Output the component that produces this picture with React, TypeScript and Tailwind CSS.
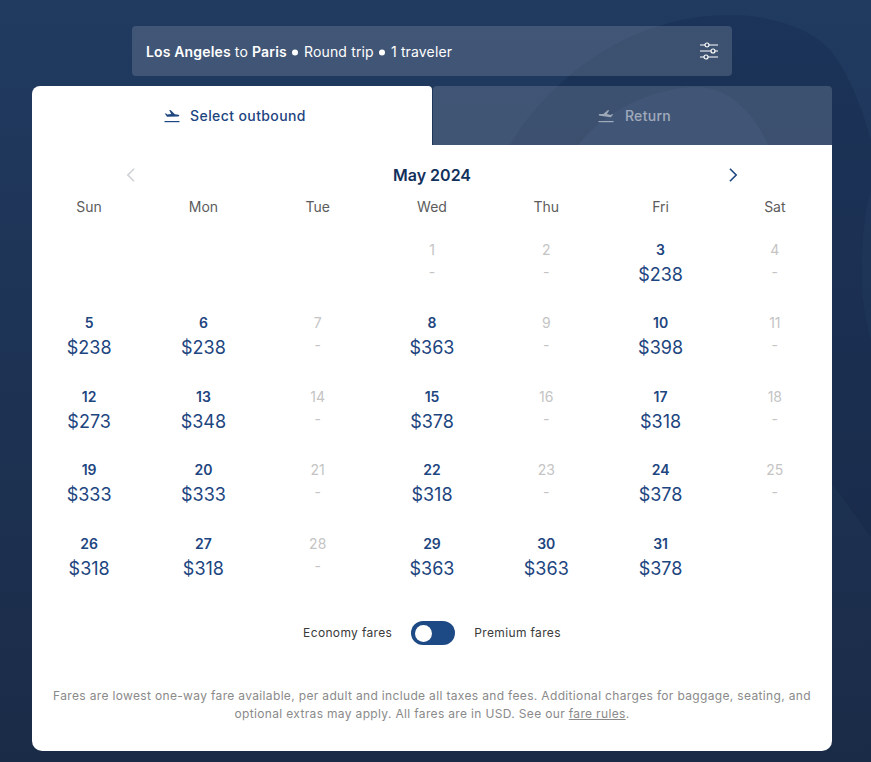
import React from 'react';

const days = [
  { d: '', p: null }, { d: '', p: null }, { d: '', p: null },
  { d: '1', p: null }, { d: '2', p: null }, { d: '3', p: '$238' }, { d: '4', p: null },
  { d: '5', p: '$238' }, { d: '6', p: '$238' }, { d: '7', p: null }, { d: '8', p: '$363' }, { d: '9', p: null }, { d: '10', p: '$398' }, { d: '11', p: null },
  { d: '12', p: '$273' }, { d: '13', p: '$348' }, { d: '14', p: null }, { d: '15', p: '$378' }, { d: '16', p: null }, { d: '17', p: '$318' }, { d: '18', p: null },
  { d: '19', p: '$333' }, { d: '20', p: '$333' }, { d: '21', p: null }, { d: '22', p: '$318' }, { d: '23', p: null }, { d: '24', p: '$378' }, { d: '25', p: null },
  { d: '26', p: '$318' }, { d: '27', p: '$318' }, { d: '28', p: null }, { d: '29', p: '$363' }, { d: '30', p: '$363' }, { d: '31', p: '$378' }, { d: '', p: null },
];

const weekdays = ['Sun', 'Mon', 'Tue', 'Wed', 'Thu', 'Fri', 'Sat'];

function PlaneIcon({ mirrored, className }: { mirrored?: boolean; className?: string }) {
  return (
    <svg viewBox="0 0 16 14" className={className} fill="currentColor">
      <g transform={mirrored ? 'translate(16 0) scale(-1 1) rotate(-6 8 6)' : undefined}>
        <path d="M1 4.800L3 7.800 14 7.400C15.300 7.200 15.800 6.200 14.600 5.700L10.800 5.200 6.800 1.200 5.200 1 7.200 5 3.200 5.500 1.900 4.300z" />
      </g>
      <rect x="0.500" y="12" width="15" height="1.200" />
    </svg>
  );
}

function SlidersIcon() {
  return (
    <svg viewBox="0 0 20 18" className="h-[18px] w-5" fill="none" stroke="currentColor" strokeWidth="1.200">
      <path d="M1 3h5M10 3h9M1 9h11M16 9h3M1 15h4M9 15h10" />
      <circle cx="8" cy="3" r="2" />
      <circle cx="14" cy="9" r="2" />
      <circle cx="7" cy="15" r="2" />
    </svg>
  );
}

function Dot() {
  return <span className="mx-[1.500px] inline-block h-[6px] w-[6px] translate-y-[-1.500px] rounded-full bg-white" />;
}

export default function App() {
  return (
    <div className="relative h-[762px] overflow-hidden bg-gradient-to-b from-[#203a60] to-[#1a2b47] font-['Inter','Liberation_Sans',sans-serif]">
      {/* background swirl */}
      <svg viewBox="0 0 871 762" className="absolute inset-0 h-full w-full">
        <path
          d="M510 145C545 85 625 15 730 15C775 15 815 32 830 50C845 68 860 100 871 140L871 190C862 220 860 270 863 300C865 315 868 330 871 340L871 537L833 485L510 300z"
          fill="#102040"
          fillOpacity="0.2"
        />
        <path d="M578 145C610 105 660 87 697 87C730 87 755 115 768 145z" fill="#20395f" />
      </svg>

      <div className="relative ml-[32px] flex w-[800px] flex-col pt-[26px]">
        <div className="ml-[100px] flex h-[50px] w-[600px] items-center justify-between rounded-[4px] bg-white/15 pl-[14px] pr-[13px] text-[14px] tracking-[0.15px] text-white">
          <div>
            <span className="font-semibold">Los Angeles</span> to <span className="font-semibold">Paris</span> <Dot /> Round trip <Dot /> 1 traveler
          </div>
          <SlidersIcon />
        </div>

        <div className="mt-[10px] flex h-[59px]">
          <div className="flex w-[400px] items-center justify-center gap-[10px] rounded-tl-[8px] rounded-tr-[4px] bg-white pl-[6px] text-[14px] font-medium tracking-[0.4px] text-[#1d4580]">
            <PlaneIcon className="h-[14px] w-[16px]" />
            Select outbound
          </div>
          <div className="ml-px flex flex-1 items-center justify-center gap-[11px] rounded-t-[4px] bg-white/15 pl-[4px] text-[14px] font-medium tracking-[0.3px] text-white/50">
            <PlaneIcon mirrored className="h-[14px] w-[16px]" />
            Return
          </div>
        </div>

        <div className="h-[606px] rounded-b-[10px] bg-white">
          <div className="relative flex h-[50px] items-start justify-center pt-[15px] text-[#12305c]">
            <div className="flex h-[30px] items-center text-[16px] font-semibold">May 2024</div>
            <svg viewBox="0 0 12 18" className="absolute left-[93px] top-[22px] h-[16px] w-[11px] text-[#cfd2d6]" fill="none" stroke="currentColor" strokeWidth="1.800"><path d="M10 2L3 9l7 7" /></svg>
            <svg viewBox="0 0 12 18" className="absolute left-[696px] top-[22px] h-[16px] w-[11px] text-[#1d4580]" fill="none" stroke="currentColor" strokeWidth="1.800"><path d="M2 2l7 7-7 7" /></svg>
          </div>

          <div className="grid grid-cols-7 text-center text-[14px] leading-[24px] text-[#5c5c5c]">
            {weekdays.map((w) => (
              <div key={w}>{w}</div>
            ))}
          </div>

          <div className="mt-[18.500px] grid grid-cols-7 gap-y-[12.500px] text-center">
            {days.map((c, i) => (
              <div key={i} className="h-[61px]">
                {c.d && (
                  <>
                    <div className={c.p ? 'text-[14px] font-semibold leading-[24px] text-[#1d4580]' : 'text-[14px] leading-[24px] text-[#c4c4c4]'}>{c.d}</div>
                    {c.p ? (
                      <div className="text-[18px] leading-[26px] text-[#1d4580]">{c.p}</div>
                    ) : (
                      <div className="text-[14px] leading-[20px] text-[#c4c4c4]">-</div>
                    )}
                  </>
                )}
              </div>
            ))}
          </div>

          <div className="mt-[28.500px] flex items-center justify-center text-[12px] tracking-[0.35px] text-[#3a3a3a]">
            <span>Economy fares</span>
            <div className="ml-[19px] mr-[19px] flex h-[24px] w-[44px] items-center rounded-full bg-[#1d4a85] pl-[4px]">
              <div className="h-[17px] w-[17px] rounded-full bg-white" />
            </div>
            <span>Premium fares</span>
          </div>

          <p className="mt-[42px] px-[16px] text-center text-[12px] leading-[18px] tracking-[0.34px] text-[#8a8a8a]">
            Fares are lowest one-way fare available, per adult and include all taxes and fees. Additional charges for baggage, seating, and optional extras may apply. All fares are in USD. See our <span className="underline">fare rules</span>.
          </p>
        </div>
      </div>
    </div>
  );
}
